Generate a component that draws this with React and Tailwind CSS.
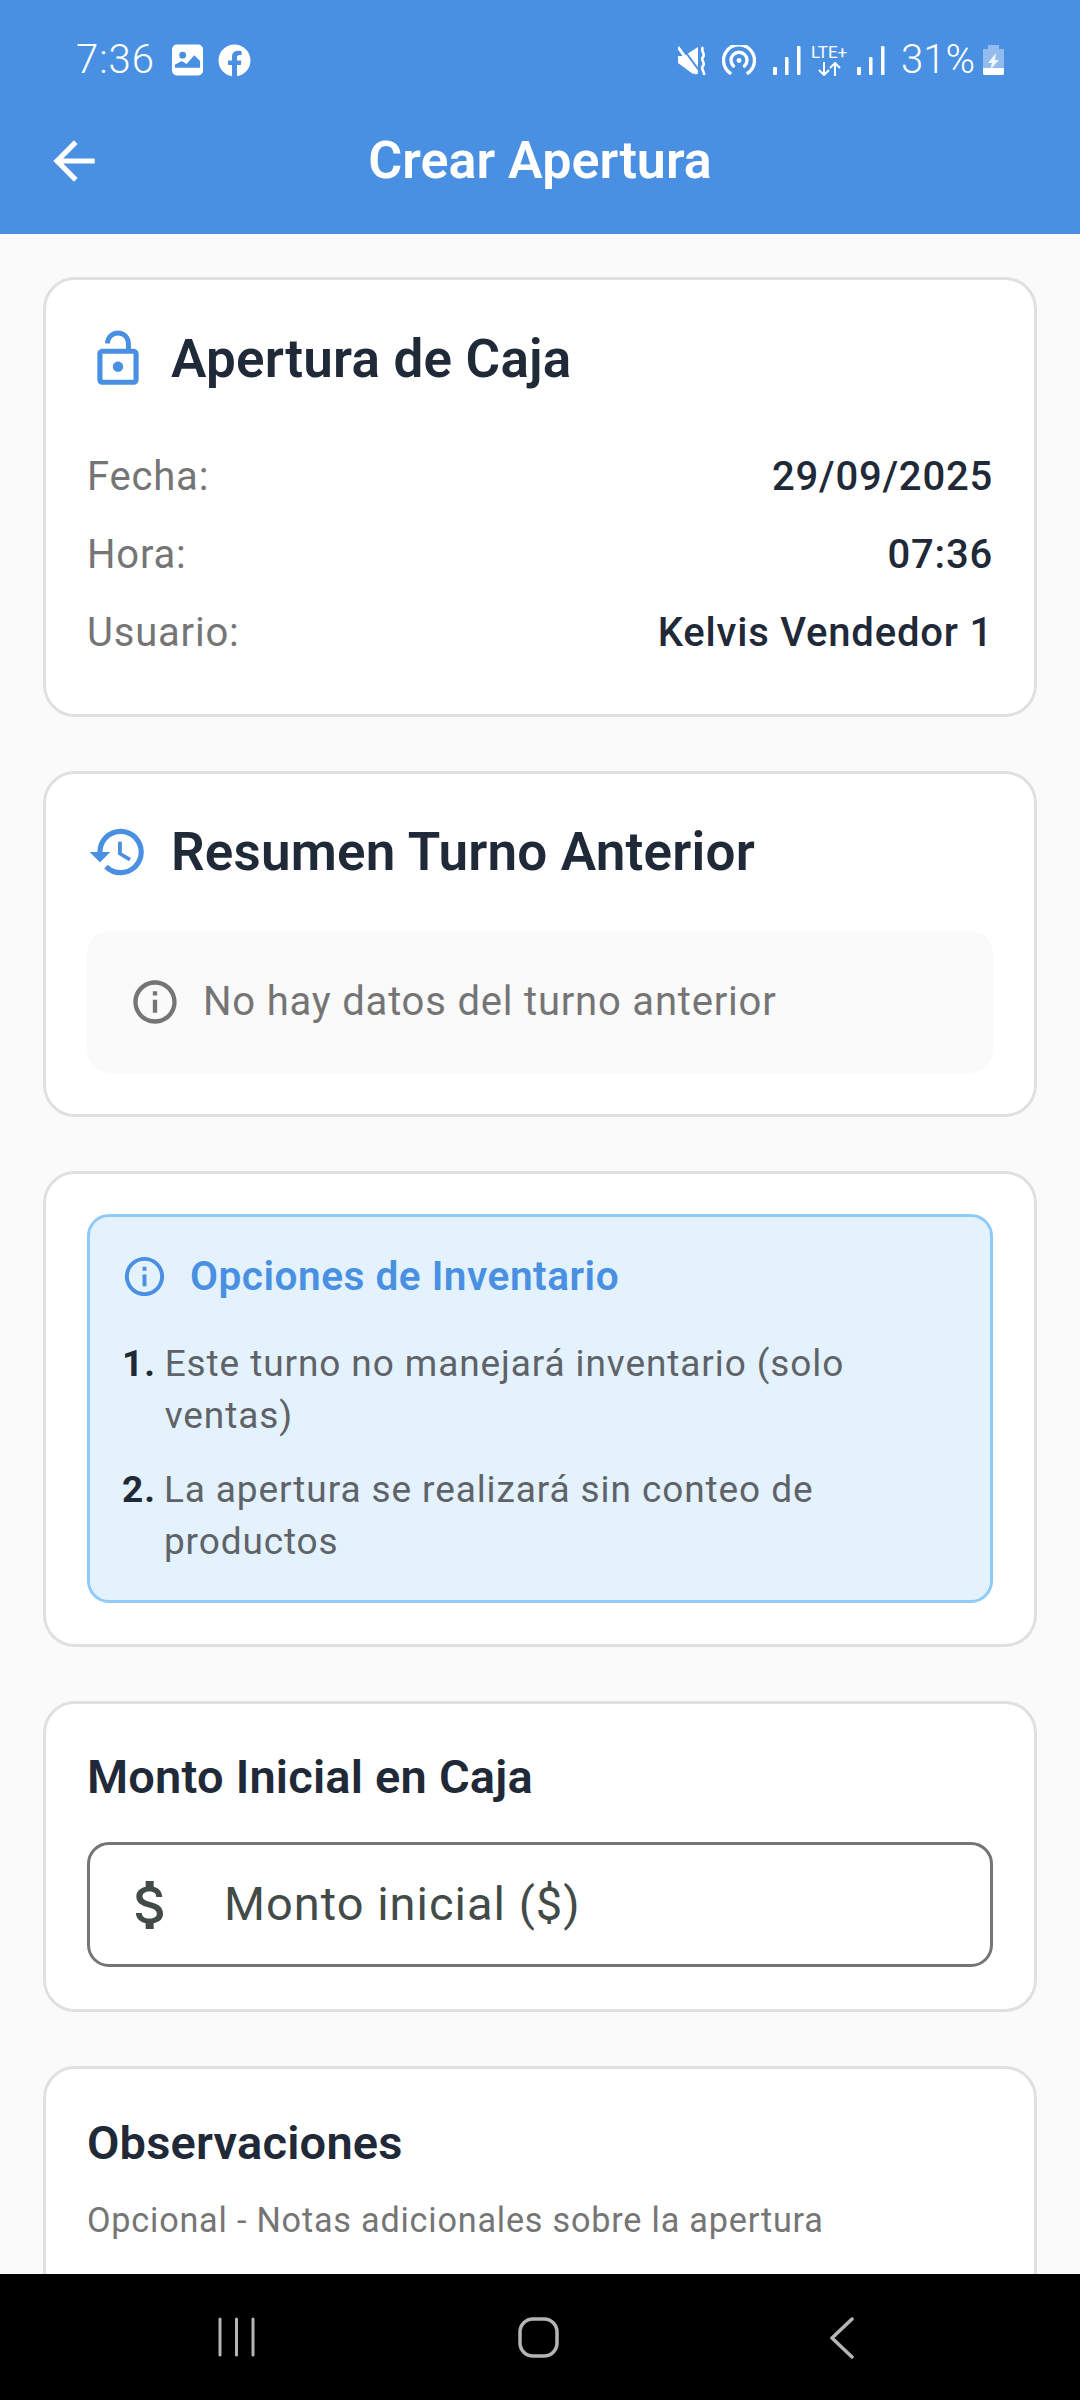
import { MdArrowBack, MdLockOpen, MdHistory, MdInfoOutline, MdAttachMoney } from "react-icons/md";
import { FaFacebook } from "react-icons/fa";

const Signal = ({ className = "" }) => (
  <svg className={className} width="28" height="29" viewBox="0 0 28 29" fill="white">
    <rect x="0" y="21" width="4" height="8" rx="1" />
    <rect x="12" y="11" width="3.5" height="18" rx="1" />
    <rect x="24" y="0" width="3.5" height="29" rx="1" />
  </svg>
);

const StatusBar = () => (
  <div className="flex items-center justify-between h-[120px] pl-[76px] pr-[76px] text-white">
    <div className="flex items-center">
      <span className="text-[40px] leading-none font-light tracking-[1px]">7:36</span>
      <svg className="ml-[17px]" width="31" height="32" viewBox="0 0 32 32">
        <rect width="32" height="32" rx="5" fill="white" />
        <circle cx="11" cy="11" r="3.5" fill="#4A90E2" />
        <path d="M3 24 L3 21 L10 17 L15 20 L23 11 L29 17 L29 24 Z" fill="#4A90E2" />
      </svg>
      <FaFacebook className="ml-[15px]" size={33} />
    </div>
    <div className="flex items-center">
      {/* mute + vibrate */}
      <svg width="29" height="29" viewBox="0 0 29 29" fill="none">
        <path d="M0 10 H6 L20 1 V26 L15 28 L0 17 Z" fill="white" />
        <path d="M3 0 L23 27" stroke="#4A90E2" strokeWidth="2" />
        <path d="M0 1 L19 28" stroke="white" strokeWidth="3" />
        <path d="M25 1 C22 5 28 8 25 11 C22 14 28 17 25 20 C22 23 27 25 26 29" stroke="white" strokeWidth="2.6" />
      </svg>
      {/* hotspot */}
      <svg className="ml-[15px]" width="34" height="30" viewBox="0 0 34 30" fill="none" stroke="white" strokeWidth="3.4" strokeLinecap="round">
        <path d="M8 28 A15.5 15.5 0 1 1 26 28" />
        <path d="M11.5 21 A8 8 0 1 1 22.5 21" />
        <circle cx="17" cy="15.5" r="2.4" fill="white" stroke="none" />
      </svg>
      <Signal className="ml-[17px]" />
      <div className="ml-[10px] w-[36px] flex flex-col items-center">
        <span className="text-[17px] leading-[17px] whitespace-nowrap">LTE+</span>
        <svg className="mt-[1px]" width="24" height="14" viewBox="0 0 24 14" fill="none" stroke="white" strokeWidth="2">
          <path d="M7 0 V13 M2 8 L7 13 L12 8" />
          <path d="M18 14 V1 M13 6 L18 1 L23 6" />
        </svg>
      </div>
      <Signal className="ml-[10px]" />
      <span className="ml-[16px] text-[40px] leading-none font-light">31%</span>
      <svg className="ml-[8px]" width="21" height="30" viewBox="0 0 21 30">
        <path d="M5 0 H16 V4 H21 V30 H0 V4 H5 Z" fill="white" fillOpacity="0.4" />
        <path d="M0 23 H21 V28 Q21 30 19 30 H2 Q0 30 0 28 Z" fill="white" />
        <path d="M13 8 L5 18 H9 L7 25 L16 15 H12 Z" fill="white" fillOpacity="0.85" />
      </svg>
    </div>
  </div>
);

const Card = ({ className = "", children }) => (
  <div className={`bg-white border-[3px] border-[#E0E0E0] rounded-[32px] px-[41px] shrink-0 ${className}`}>{children}</div>
);

const CardTitle = ({ icon, children }) => (
  <div className="flex items-center gap-[22px]">
    <span className="w-[62px] flex justify-center shrink-0 text-[#4A90E2]">{icon}</span>
    <h2 className="text-[53px] leading-[62px] font-semibold text-[#1F2937] tracking-[0.2px]">{children}</h2>
  </div>
);

const Row = ({ label, value }) => (
  <div className="flex justify-between items-center h-[78px] text-[40px]">
    <span className="text-[#757575] tracking-[0.8px]">{label}</span>
    <span className="font-medium text-[#1F2937] tracking-[0.8px]">{value}</span>
  </div>
);

const ListItem = ({ n, lines }) => (
  <div className="flex text-[37px] leading-[52px] tracking-[0.9px] text-[#5F6368]">
    <span className="w-[44px] font-bold text-[#1F2937]">{n}.</span>
    <span>{lines}</span>
  </div>
);

export default function App() {
  return (
    <div className="h-[2400px] w-[1080px] overflow-hidden flex flex-col bg-[#FAFAFA] font-['Roboto',sans-serif]">
      <header className="h-[234px] shrink-0 bg-[#4A90E2]">
        <StatusBar />
        <div className="relative flex items-center justify-center h-[78px] mt-[2px]">
          <MdArrowBack className="absolute left-[43px] text-white" size={62} />
          <h1 className="text-[52px] font-semibold text-white">Crear Apertura</h1>
        </div>
      </header>

      <main className="flex-1 overflow-hidden px-[43px] pt-[43px] flex flex-col gap-[54px]">
        <Card className="h-[440px] pt-[47px]">
          <CardTitle icon={<MdLockOpen size={64} />}>Apertura de Caja</CardTitle>
          <div className="mt-[47px]">
            <Row label="Fecha:" value="29/09/2025" />
            <Row label="Hora:" value="07:36" />
            <Row label="Usuario:" value="Kelvis Vendedor 1" />
          </div>
        </Card>

        <Card className="h-[346px] pt-[46px]">
          <CardTitle icon={<MdHistory size={64} />}>Resumen Turno Anterior</CardTitle>
          <div className="mt-[47px] h-[142px] rounded-[22px] bg-[#FAFAFA] flex items-center pl-[42px] gap-[22px] text-[40px] text-[#757575] tracking-[0.8px]">
            <MdInfoOutline size={52} />
            <span>No hay datos del turno anterior</span>
          </div>
        </Card>

        <Card className="h-[476px] pt-[40px]">
          <div className="h-[389px] rounded-[22px] border-[3px] border-[#90CAF9] bg-[#E3F2FD] px-[32px] pt-[33px]">
            <div className="flex items-center gap-[22px] -ml-[1px] text-[#4A90E2]">
              <MdInfoOutline size={47} />
              <span className="text-[40.6px] leading-[52px] font-semibold tracking-[0.5px]">Opciones de Inventario</span>
            </div>
            <div className="mt-[36px] flex flex-col gap-[22px]">
              <ListItem n={1} lines="Este turno no manejará inventario (solo ventas)" />
              <ListItem n={2} lines="La apertura se realizará sin conteo de productos" />
            </div>
          </div>
        </Card>

        <Card className="h-[311px] pt-[45px]">
          <h3 className="text-[47px] leading-[56px] font-semibold text-[#1F2937] tracking-[0.2px]">Monto Inicial en Caja</h3>
          <div className="mt-[37px] h-[125px] rounded-[22px] border-[3px] border-[#757575] flex items-center text-[#424B48]">
            <MdAttachMoney className="ml-[29px]" size={64} />
            <span className="ml-[41px] text-[47px] tracking-[1px]">Monto inicial ($)</span>
          </div>
        </Card>

        <Card className="h-[400px] pt-[46px]">
          <h3 className="text-[47px] leading-[56px] font-semibold text-[#1F2937] tracking-[0.2px]">Observaciones</h3>
          <p className="mt-[24px] text-[34.2px] text-[#757575] tracking-[0.8px]">Opcional - Notas adicionales sobre la apertura</p>
        </Card>
      </main>

      <nav className="h-[126px] shrink-0 bg-black flex items-start pl-[218px] pt-[43px]">
        <svg width="37" height="40" viewBox="0 0 37 40" stroke="#B5B5B5" strokeWidth="3" strokeLinecap="round">
          <path d="M2 2 V38 M18.5 2 V38 M35 2 V38" />
        </svg>
        <svg className="ml-[263px]" width="41" height="41" viewBox="0 0 41 41" fill="none" stroke="#B5B5B5" strokeWidth="3.5">
          <rect x="2" y="2" width="37" height="37" rx="13" />
        </svg>
        <svg className="ml-[271px]" width="24" height="42" viewBox="0 0 24 42" fill="none" stroke="#B5B5B5" strokeWidth="3.5" strokeLinecap="round" strokeLinejoin="round">
          <path d="M22 2 L2 21 L22 40" />
        </svg>
      </nav>
    </div>
  );
}
